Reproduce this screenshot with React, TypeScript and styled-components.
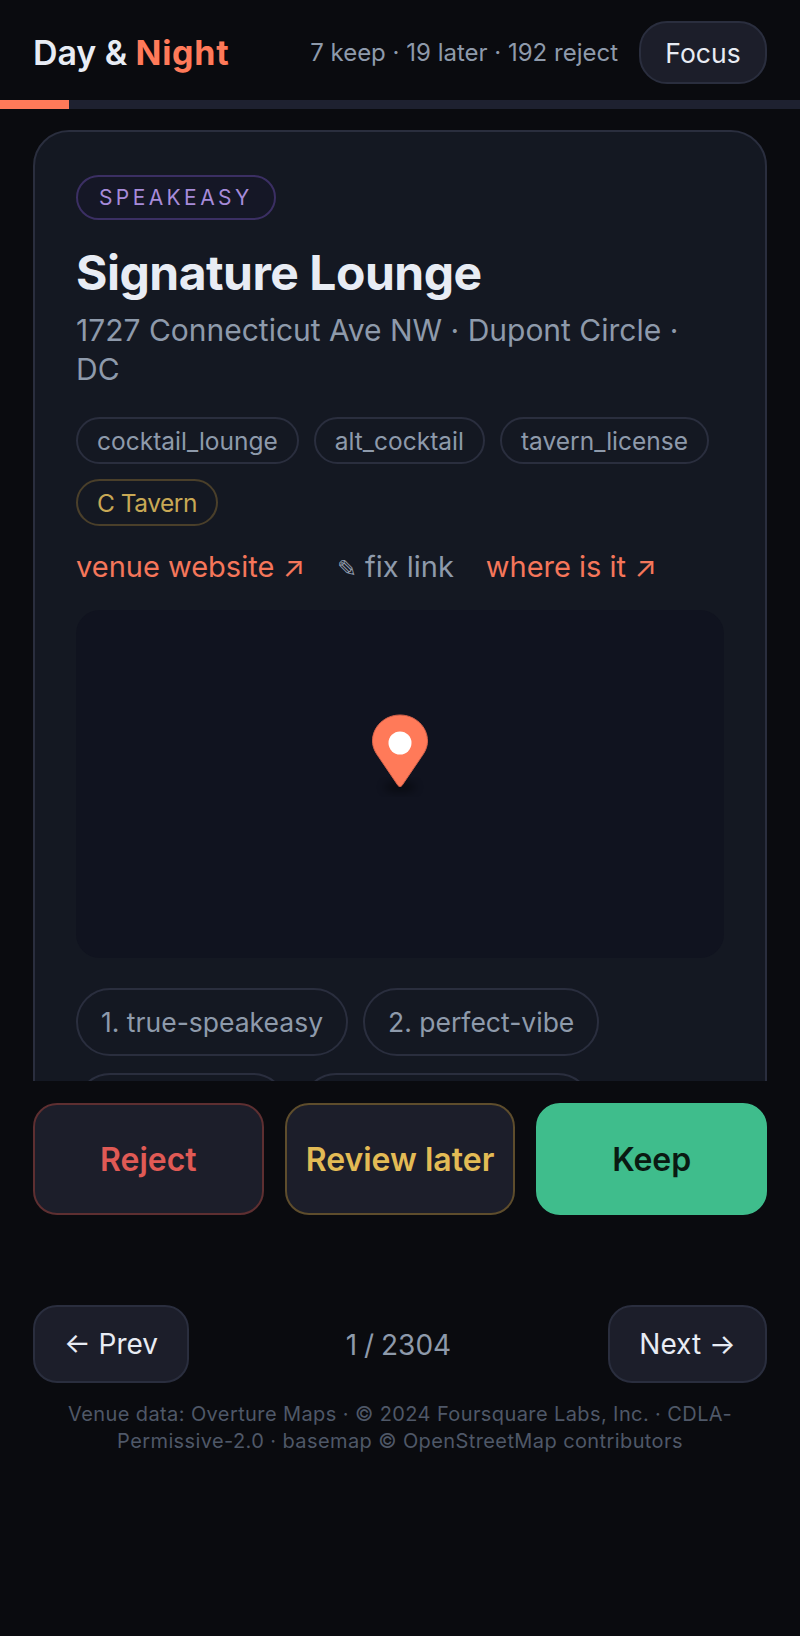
import React from "react";
import styled, { createGlobalStyle } from "styled-components";

const Global = createGlobalStyle`
  html, body { margin: 0; padding: 0; background: #0a0b0f; }
  * { box-sizing: border-box; }
  body { font-family: Inter, "Liberation Sans", sans-serif; }
`;

const Shell = styled.div`
  width: 800px;
  height: 1636px;
  display: flex;
  flex-direction: column;
  background: #0a0b0f;
  overflow: hidden;
`;

const Header = styled.header`
  height: 100px;
  flex: none;
  padding: 5px 33px 0;
  display: flex;
  align-items: center;
  justify-content: space-between;
`;

const Logo = styled.div`
  font-size: 34px;
  font-weight: 600;
  letter-spacing: -0.1px;
  color: #e8ecf4;
  span { color: #ff7a59; font-weight: 700; letter-spacing: 0.7px; }
`;

const HeaderRight = styled.div`
  display: flex;
  align-items: center;
  gap: 21px;
`;

const Stats = styled.div`
  font-size: 24px;
  color: #8e9aab;
`;

const FocusButton = styled.button`
  height: 63px;
  width: 128px;
  border-radius: 28px;
  border: 2px solid #2a2e3e;
  background: #1c1e2a;
  color: #e8ecf4;
  font: 400 26.5px Inter, sans-serif;
`;

const Progress = styled.div`
  height: 9px;
  flex: none;
  background: #1e2130;
`;

const ProgressFill = styled.div`
  height: 100%;
  background: #ff7a59;
`;

const CardViewport = styled.div`
  height: 972px;
  flex: none;
  padding: 21px 33px 0;
  overflow: hidden;
`;

const Card = styled.article`
  border: 2px solid #2a2e3e;
  border-radius: 36px;
  background: #141822;
  padding: 43px 41px;
`;

const TypeBadge = styled.div`
  display: inline-flex;
  align-items: center;
  height: 45px;
  padding: 0 21px;
  border-radius: 23px;
  border: 2px solid #3b2f63;
  background: #151726;
  color: #a78bda;
  font-size: 21px;
  letter-spacing: 3.4px;
`;

const Title = styled.h1`
  margin: 25px 0 0;
  font-size: 48px;
  line-height: 56px;
  font-weight: 700;
  letter-spacing: -0.5px;
  color: #e8ecf4;
`;

const Address = styled.p`
  margin: 10px 0 0;
  font-size: 30px;
  line-height: 39px;
  color: #8e9aab;
`;

const ChipRow = styled.div<{ $gap: number; $top: number }>`
  display: flex;
  flex-wrap: wrap;
  gap: ${(p) => p.$gap}px 15px;
  margin-top: ${(p) => p.$top}px;
`;

const Chip = styled.span<{ $gold?: boolean }>`
  display: inline-flex;
  align-items: center;
  height: 47px;
  padding: 0 19px;
  border-radius: 24px;
  border: 2px solid ${(p) => (p.$gold ? "#4a3f2a" : "#2a2e3e")};
  font-size: 24.5px;
  letter-spacing: ${(p) => (p.$gold ? "-0.5px" : "0")};
  color: ${(p) => (p.$gold ? "#c8a855" : "#8e9aab")};
`;

const Links = styled.div`
  display: flex;
  gap: 32px;
  margin-top: 21px;
  font-size: 29px;
  line-height: 40px;
`;

const LinkText = styled.a<{ $muted?: boolean }>`
  color: ${(p) => (p.$muted ? "#8e9aab" : "#f5765a")};
  white-space: nowrap;
`;

const Pencil = styled.span`
  font-size: 24px;
  margin-right: 8px;
`;

const MapBox = styled.div`
  height: 348px;
  margin-top: 21px;
  border-radius: 24px;
  background: #10131f;
  display: flex;
  align-items: center;
  justify-content: center;
`;

const Pin = styled.svg`
  width: 66px;
  height: 90px;
  margin-bottom: 60px;
`;

const Vibe = styled.span`
  display: inline-flex;
  align-items: center;
  height: 68px;
  padding: 0 23px;
  border-radius: 34px;
  border: 2px solid #2a2e3e;
  font-size: 26.5px;
  color: #8e9aab;
  white-space: nowrap;
`;

const Actions = styled.div`
  flex: none;
  display: grid;
  grid-template-columns: repeat(3, 1fr);
  gap: 21px;
  padding: 22px 33px;
`;

const ActionButton = styled.button<{ $tone: "reject" | "later" | "keep" }>`
  height: 112px;
  border-radius: 24px;
  font: 600 32px Inter, sans-serif;
  padding: 0;
  border: 2px solid
    ${(p) => (p.$tone === "reject" ? "#5e2f31" : p.$tone === "later" ? "#5e4d2c" : "#3fbd8c")};
  background: ${(p) => (p.$tone === "keep" ? "#3fbd8c" : "#1c1e2a")};
  color: ${(p) => (p.$tone === "reject" ? "#e05a55" : p.$tone === "later" ? "#e3bb55" : "#0a1a12")};
`;

const Nav = styled.nav`
  flex: none;
  margin-top: 68px;
  padding: 0 33px;
  display: flex;
  align-items: center;
  justify-content: space-between;
`;

const NavButton = styled.button`
  height: 78px;
  padding: 0;
  border-radius: 24px;
  border: 2px solid #2a2e3e;
  background: #1c1e2a;
  color: #e8ecf4;
  font: 400 28px Inter, sans-serif;
`;

const PrevButton = styled(NavButton)`
  width: 156px;
`;

const NextButton = styled(NavButton)`
  width: 159px;
`;

const Counter = styled.div`
  font-size: 28px;
  word-spacing: -1px;
  color: #8e9aab;
  padding-top: 2px;
`;

const Footer = styled.footer`
  flex: none;
  margin-top: 18px;
  padding: 0 33px;
  text-align: center;
  font-size: 20px;
  line-height: 27px;
  letter-spacing: 0.4px;
  color: #4f5868;
`;

export default function App() {
  return (
    <Shell>
      <Global />
      <Header>
        <Logo>
          Day &amp; <span>Night</span>
        </Logo>
        <HeaderRight>
          <Stats>7 keep · 19 later · 192 reject</Stats>
          <FocusButton>Focus</FocusButton>
        </HeaderRight>
      </Header>
      <Progress>
        <ProgressFill style={{ width: "8.6%" }} />
      </Progress>
      <CardViewport>
        <Card>
          <TypeBadge>SPEAKEASY</TypeBadge>
          <Title>Signature Lounge</Title>
          <Address>1727 Connecticut Ave NW · Dupont Circle · DC</Address>
          <ChipRow $gap={15} $top={28}>
            <Chip>cocktail_lounge</Chip>
            <Chip>alt_cocktail</Chip>
            <Chip>tavern_license</Chip>
            <Chip $gold>C Tavern</Chip>
          </ChipRow>
          <Links>
            <LinkText>venue website ↗</LinkText>
            <LinkText $muted>
              <Pencil>✎</Pencil>fix link
            </LinkText>
            <LinkText>where is it ↗</LinkText>
          </Links>
          <MapBox>
            <Pin viewBox="0 0 66 90">
              <defs>
                <filter id="pinShadow" x="-50%" y="-50%" width="200%" height="200%">
                  <feGaussianBlur stdDeviation="4" />
                </filter>
              </defs>
              <ellipse cx="33" cy="78" rx="16" ry="5" fill="#000" opacity="0.45" filter="url(#pinShadow)" />
              <path
                d="M33 6C17.8 6 5.5 17.5 5.5 32c0 6.5 3 11.7 6.5 16.5L31 76.5c1 1.4 3 1.4 4 0l19-28C57.5 43.7 60.5 38.5 60.5 32 60.5 17.5 48.2 6 33 6Z"
                fill="#ff7a59"
                stroke="#d4614a"
                strokeWidth="1"
              />
              <circle cx="33" cy="34" r="11.5" fill="#fff" />
            </Pin>
          </MapBox>
          <ChipRow $gap={17} $top={30}>
            <Vibe>1. true-speakeasy</Vibe>
            <Vibe>2. perfect-vibe</Vibe>
            <Vibe>3. date-night</Vibe>
            <Vibe>4. classic-cocktails</Vibe>
          </ChipRow>
        </Card>
      </CardViewport>
      <Actions>
        <ActionButton $tone="reject">Reject</ActionButton>
        <ActionButton $tone="later">Review later</ActionButton>
        <ActionButton $tone="keep">Keep</ActionButton>
      </Actions>
      <Nav>
        <PrevButton>← Prev</PrevButton>
        <Counter>1 / 2304</Counter>
        <NextButton>Next →</NextButton>
      </Nav>
      <Footer>
        Venue data: Overture Maps · © 2024 Foursquare Labs, Inc. · CDLA-Permissive-2.0 · basemap © OpenStreetMap contributors
      </Footer>
    </Shell>
  );
}
